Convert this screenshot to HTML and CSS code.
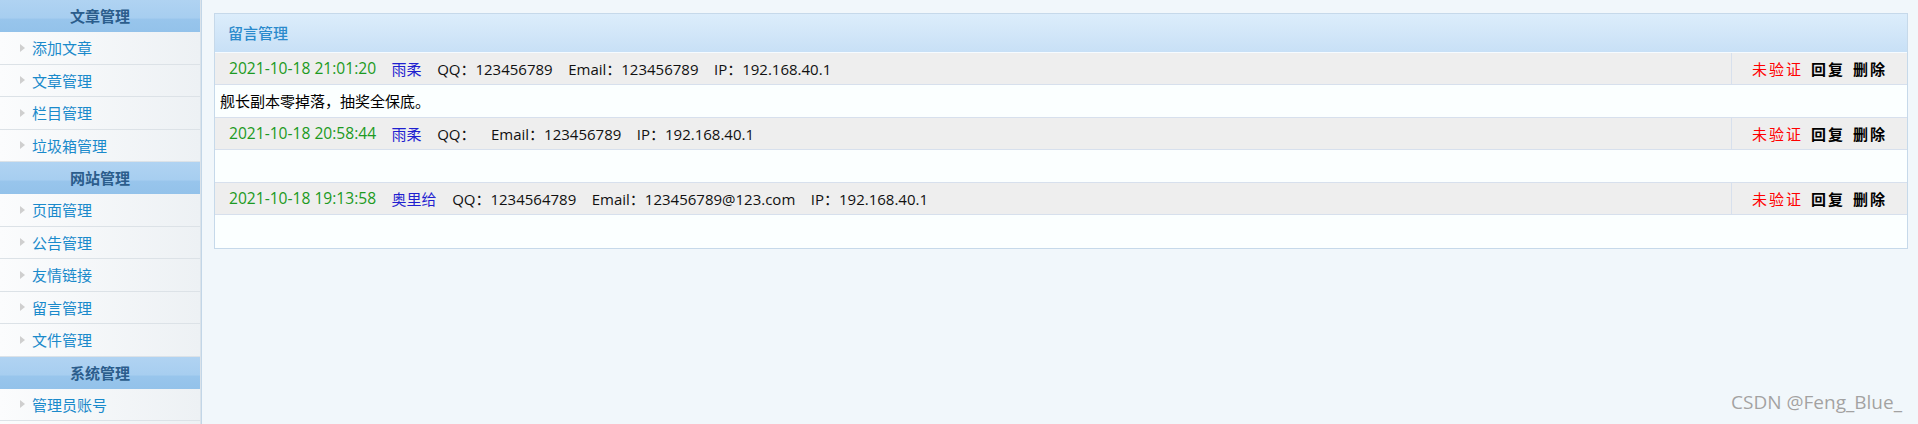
FILE: index.html
```html
<!DOCTYPE html>
<html lang="zh-CN">
<head>
<meta charset="utf-8">
<title>留言管理</title>
<link rel="stylesheet" href="styles.css">
</head>
<body>
<div class="layout">
  <aside class="sidebar">
    <div class="side-title">文章管理</div>
    <a class="side-item">添加文章</a>
    <a class="side-item">文章管理</a>
    <a class="side-item">栏目管理</a>
    <a class="side-item">垃圾箱管理</a>
    <div class="side-title">网站管理</div>
    <a class="side-item">页面管理</a>
    <a class="side-item">公告管理</a>
    <a class="side-item">友情链接</a>
    <a class="side-item">留言管理</a>
    <a class="side-item">文件管理</a>
    <div class="side-title">系统管理</div>
    <a class="side-item">管理员账号</a>
  </aside>
  <main class="main">
    <section class="panel">
      <div class="panel-head">留言管理</div>
      <div class="msg">
        <div class="msg-meta">
          <div class="meta-info"><span class="date">2021-10-18 21:01:20</span><span class="name">雨柔</span><span>QQ：123456789</span><span>Email：123456789</span><span>IP：192.168.40.1</span></div>
          <div class="meta-actions"><span class="unverified">未验证</span><a class="act">回复</a><a class="act">删除</a></div>
        </div>
        <div class="msg-body">舰长副本零掉落，抽奖全保底。</div>
      </div>
      <div class="msg">
        <div class="msg-meta">
          <div class="meta-info"><span class="date">2021-10-18 20:58:44</span><span class="name">雨柔</span><span>QQ：</span><span>Email：123456789</span><span>IP：192.168.40.1</span></div>
          <div class="meta-actions"><span class="unverified">未验证</span><a class="act">回复</a><a class="act">删除</a></div>
        </div>
        <div class="msg-body"></div>
      </div>
      <div class="msg">
        <div class="msg-meta">
          <div class="meta-info"><span class="date">2021-10-18 19:13:58</span><span class="name">奥里给</span><span>QQ：1234564789</span><span>Email：123456789@123.com</span><span>IP：192.168.40.1</span></div>
          <div class="meta-actions"><span class="unverified">未验证</span><a class="act">回复</a><a class="act">删除</a></div>
        </div>
        <div class="msg-body"></div>
      </div>
    </section>
  </main>
</div>
<div class="watermark">CSDN @Feng_Blue_</div>
</body>
</html>
```

FILE: styles.css
```css
* { box-sizing: border-box; }
html, body {
  margin: 0;
  padding: 0;
  height: 424px;
  overflow: hidden;
}
body {
  background: #f1f7fb;
  font-family: "Open Sans", "Noto Sans CJK SC", sans-serif;
  font-size: 15px;
  color: #111;
  position: relative;
}
.layout {
  display: flex;
  height: 424px;
}
.sidebar {
  width: 201px;
  flex: none;
  display: flex;
  flex-direction: column;
  border-right: 1px solid #dbe3ea;
  box-shadow: 1px 0 0 #c2d6e7;
  background: linear-gradient(to right, #fbfcfd, #edf1f4);
}
.side-title {
  height: 32px;
  line-height: 32px;
  text-align: center;
  font-family: "Noto Sans CJK SC", sans-serif;
  font-weight: bold;
  color: #2b5d8c;
  background: linear-gradient(#b0d3f2 0%, #a7cef0 56%, #98c5ec 60%, #93c2ea 100%);
}
.side-item {
  display: flex;
  align-items: center;
  height: 32.5px;
  padding-left: 32px;
  position: relative;
  color: #1a8acb;
  font-family: "Noto Sans CJK SC", sans-serif;
  border-bottom: 1px solid #dce2e7;
  background: linear-gradient(to right, #fbfcfd, #edf1f4);
}
.side-item::before {
  content: "";
  position: absolute;
  left: 20px;
  top: 50%;
  margin-top: -4px;
  border-left: 5px solid #cfcfcf;
  border-top: 4px solid transparent;
  border-bottom: 4px solid transparent;
}
.main {
  flex: 1;
  padding: 13px 10px 0 13px;
}
.panel {
  border: 1px solid #c6d9ea;
  background: #fbffff;
}
.panel-head {
  height: 38.5px;
  padding-left: 13px;
  display: flex;
  align-items: center;
  color: #2a8acc;
  font-family: "Noto Sans CJK SC", sans-serif;
  font-weight: 500;
  background: linear-gradient(#dcedfb, #c8e0f6);
  border-bottom: 1px solid #f6fbff;
}
.msg-meta {
  display: flex;
  height: 32.5px;
  background: #eeeeee;
  border-bottom: 1px solid #d7e0ed;
}
.meta-info {
  flex: 1;
  display: flex;
  align-items: center;
  padding-left: 14px;
  gap: 15.5px;
  white-space: nowrap;
  font-size: 15px;
}
.date { color: #1c9a22; font-size: 15.6px; }
.name { color: #1f1fd0; }
.meta-actions {
  width: 176px;
  flex: none;
  display: flex;
  align-items: center;
  justify-content: center;
  border-left: 1px solid #d7e0ed;
  font-family: "Noto Sans CJK SC", sans-serif;
  letter-spacing: 2px;
  gap: 8px;
}
.unverified { color: #ff0000; }
.act { color: #000; font-weight: bold; }
.msg-body {
  height: 32.5px;
  display: flex;
  align-items: center;
  padding-left: 5px;
  background: #fbffff;
  border-bottom: 1px solid #d7e0ed;
  font-family: "Noto Sans CJK SC", sans-serif;
  color: #000;
}
.msg:last-child .msg-body { border-bottom: 0; }
.watermark {
  position: absolute;
  right: 16px;
  top: 389px;
  font-family: "Open Sans", sans-serif;
  font-size: 19px;
  color: #a2a2a2;
  text-shadow: 0 0 1px #fff;
}
```
